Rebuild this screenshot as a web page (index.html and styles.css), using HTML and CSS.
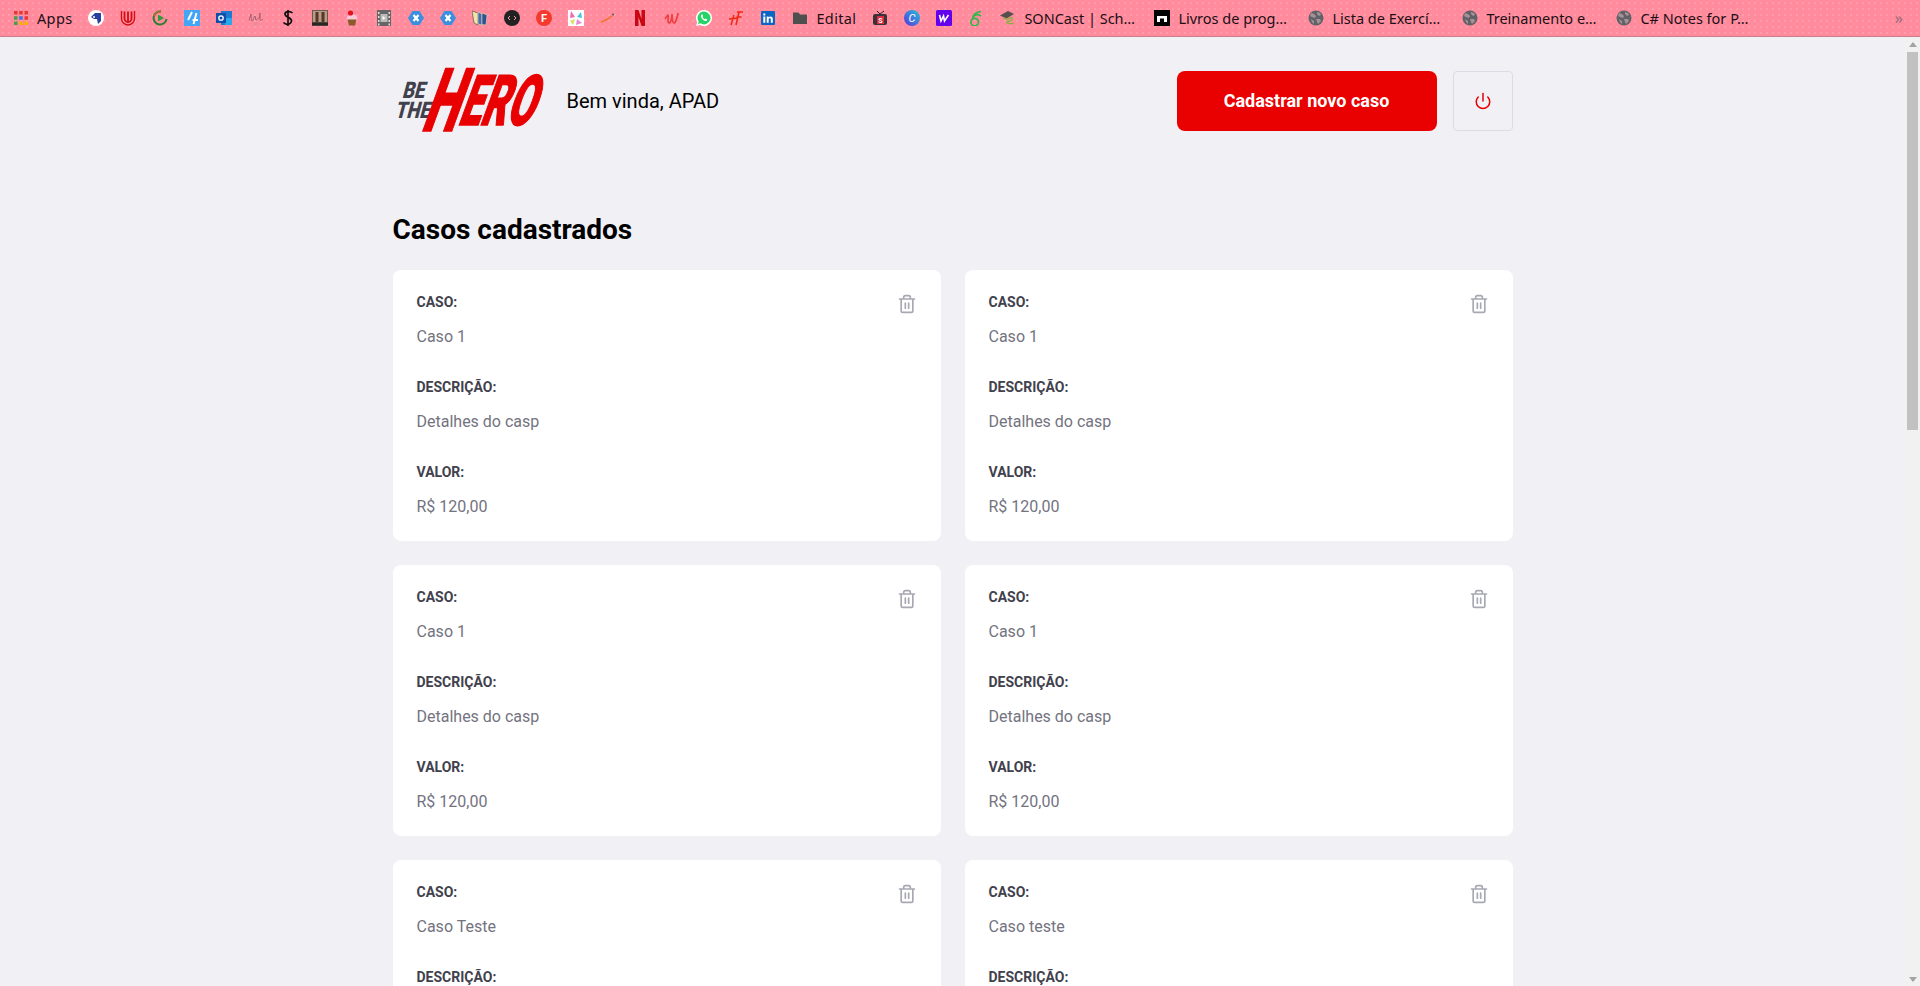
FILE: index.html

```html
<!DOCTYPE html>
<html lang="pt-BR">
<head>
  <meta charset="UTF-8">
  <title>Be The Hero</title>
  <link rel="stylesheet" href="styles.css">
</head>
<body>
  <svg class="defs" width="0" height="0">
    <symbol id="globe" viewBox="0 0 16 16">
      <circle cx="8" cy="8" r="7.500" fill="#5f6368"/>
      <path d="M3 3l3 1 2 2-1 2-3-1-2-1zM9 2l3 1 1 2-2 1-2-2zM8 9l4 0 1 2-3 3-1-2zM3 9l3 2 0 3-2-2z" fill="#a98f96"/>
    </symbol>
    <symbol id="xhex" viewBox="0 0 16 16">
      <path d="M4.500 1h7L16 8l-4.500 7h-7L0 8z" fill="#3a8fe0"/>
      <path d="M5.500 5l5 6M10.500 5l-5 6" stroke="#fff" stroke-width="2.200"/>
    </symbol>
    <symbol id="bin" viewBox="0 0 24 24">
      <path d="M3 6h18M19 6v14a2 2 0 0 1-2 2H7a2 2 0 0 1-2-2V6m3 0V4a2 2 0 0 1 2-2h4a2 2 0 0 1 2 2v2M10 11v6M14 11v6"/>
    </symbol>
  </svg>

  <nav class="bookmarks">
    <a class="mark short"><svg class="ico" viewBox="0 0 16 16"><path fill="#e53935" d="M1 1h3.500v3.500H1zM6.200 1h3.500v3.500H6.200zM11.500 1H15v3.500h-3.500zM11.500 6.200H15v3.500h-3.500z"/><path fill="#43a047" d="M1 6.200h3.500v3.500H1zM1 11.500h3.500V15H1z"/><path fill="#3f6fe0" d="M6.200 6.200h3.500v3.500H6.200z"/><path fill="#fbb000" d="M6.200 11.500h3.500V15H6.200zM11.500 11.500H15V15h-3.500z"/></svg>Apps</a>
    <a class="mark"><svg class="ico" viewBox="0 0 16 16"><circle cx="8" cy="8" r="8" fill="#fff"/><path d="M3 7l4-4h6v8l-3 3-1-5H6z" fill="#2b3f9e"/><circle cx="6" cy="7" r="1" fill="#fff"/></svg></a>
    <a class="mark"><svg class="ico" viewBox="0 0 16 16"><path d="M1.500 1v7.500a6.500 6.500 0 0 0 13 0V1" fill="none" stroke="#d40d12" stroke-width="1.400"/><path d="M4.500 1.500v7a3.500 3.500 0 0 0 7 0v-7M8 1.500v10" fill="none" stroke="#d40d12" stroke-width="1.800"/></svg></a>
    <a class="mark"><svg class="ico" viewBox="0 0 16 16"><path d="M14.500 9A6.500 6.500 0 1 1 9 1.600" fill="none" stroke="#2f7d32" stroke-width="2"/><path d="M2 6a6.500 6.500 0 0 1 7-4.400" fill="none" stroke="#a5703a" stroke-width="2"/><path d="M6 4.500L12 8l-6 3.500z" fill="#2f9a3a"/></svg></a>
    <a class="mark"><svg class="ico" viewBox="0 0 16 16"><rect width="16" height="16" fill="#42a5f5"/><path d="M8 2L4 10M12.500 3L9.500 14M8.500 10H14" fill="none" stroke="#fff" stroke-width="1.900"/></svg></a>
    <a class="mark"><svg class="ico" viewBox="0 0 16 16"><rect x="5" y="1" width="11" height="14" fill="#1f78d1"/><rect x="9" y="8" width="7" height="7" fill="#28a8ea"/><rect y="3" width="10" height="10" fill="#0f4fa8"/><circle cx="5" cy="8" r="2.200" fill="none" stroke="#fff" stroke-width="1.300"/></svg></a>
    <a class="mark"><svg class="ico" viewBox="0 0 16 16"><path d="M1 11c1-4 2-7 2-7s0 6 1 7 2-5 3-5 0 4 1 4 2-2 3-2 1-5 1-5v7c0 1 2 0 3-1" fill="none" stroke="#8a5a68" stroke-width=".8"/><path d="M5 14h6" stroke="#c7919e" stroke-width="1"/></svg></a>
    <a class="mark"><svg class="ico" viewBox="0 0 16 16"><path d="M12.500 3C10 .5 4.500 1.500 5 4.500S12 7.500 11.500 11 6 15.500 3.500 12.500M8 0v16" fill="none" stroke="#111" stroke-width="1.700"/></svg></a>
    <a class="mark"><svg class="ico" viewBox="0 0 16 16"><rect width="16" height="16" fill="#6a5a50"/><rect x="1" y="1" width="14" height="11" fill="#b59a84"/><path d="M3.500 2h3v10h-3zM9.500 2h3v10h-3z" fill="#5a3428"/><rect y="12.500" width="16" height="3" fill="#2c2622"/></svg></a>
    <a class="mark"><svg class="ico" viewBox="0 0 16 16"><path d="M3.500 9h9l-1.500 6.500H5z" fill="#8a5a2a"/><path d="M2.500 9.500a5.500 5.500 0 0 1 11 0z" fill="#f7c8d8"/><circle cx="6.500" cy="3" r="2.600" fill="#e2131f"/></svg></a>
    <a class="mark"><svg class="ico" viewBox="0 0 16 16"><rect x="1" width="14" height="16" fill="#666"/><path d="M2 2h1.500v2H2zM2 6h1.500v2H2zM2 10h1.500v2H2zM2 13.500h1.500v2H2zM12.500 2H14v2h-1.500zM12.500 6H14v2h-1.500zM12.500 10H14v2h-1.500zM12.500 13.500H14v2h-1.500z" fill="#ddd"/><rect x="4.500" y="4" width="7" height="8" fill="#bbb"/><path d="M6.500 6l3 2-3 2z" fill="#fff"/></svg></a>
    <a class="mark"><svg class="ico"><use href="#xhex"/></svg></a>
    <a class="mark"><svg class="ico"><use href="#xhex"/></svg></a>
    <a class="mark"><svg class="ico" viewBox="0 0 16 16"><path d="M0 1l6 2v12L2 13z" fill="#f0e4a8" stroke="#444" stroke-width=".6"/><path d="M6 2l4 2v11l-4-1z" fill="#4a6ab0" stroke="#ecdfae" stroke-width=".6"/><path d="M10 3l5 2-1 10-4-.5z" fill="#2f4f94" stroke="#ecdfae" stroke-width=".6"/></svg></a>
    <a class="mark"><svg class="ico" viewBox="0 0 16 16"><circle cx="8" cy="8" r="8" fill="#222"/><path d="M6 6L4 8l2 2M10 6l2 2-2 2" fill="none" stroke="#e9a0ae" stroke-width="1"/></svg></a>
    <a class="mark"><svg class="ico" viewBox="0 0 16 16"><circle cx="8" cy="8" r="8" fill="#f4392d"/><text class="ico-letter" x="8" y="12" fill="#fff">F</text></svg></a>
    <a class="mark"><svg class="ico" viewBox="0 0 16 16"><rect width="16" height="16" fill="#fff"/><path d="M3 1l4 6-5 1z" fill="#f06bb0"/><path d="M13 2L9 7l5 1z" fill="#3fc6d8"/><path d="M2 11l5-2-2 6z" fill="#d8e060"/><path d="M14 13L9 9l-1 6z" fill="#e48ad8"/></svg></a>
    <a class="mark"><svg class="ico" viewBox="0 0 16 16"><path d="M1 12c4-1 7-3 11-6" fill="none" stroke="#f0701a" stroke-width="1.300"/><circle cx="13" cy="4.500" r="1" fill="#555"/></svg></a>
    <a class="mark"><svg class="ico" viewBox="0 0 16 16"><path d="M3 0h3.500l3 9V0H13v16H9.500l-3-9v9H3z" fill="#c90812"/></svg></a>
    <a class="mark"><svg class="ico" viewBox="0 0 16 16"><path d="M1 9c1-1 2-4 3-4S3 13 5 13s3-6 3-8 0 8 2 8 4-9 4-10" fill="none" stroke="#ef3e3e" stroke-width="1.700"/></svg></a>
    <a class="mark"><svg class="ico" viewBox="0 0 16 16"><path d="M8 0a8 8 0 0 0-6.800 12.200L0 16l3.900-1.100A8 8 0 1 0 8 0z" fill="#fff"/><path d="M8 1.600a6.400 6.400 0 0 0-5.300 10l-.7 2.400 2.500-.7A6.400 6.400 0 1 0 8 1.600z" fill="#25d366"/><path d="M5.500 4.500c-1 1-.8 2.800.8 4.600s3.500 2.500 4.600 1.400l.4-1-1.800-1-.8.700c-1-.4-1.800-1.300-2.200-2.200l.7-.8-.9-1.900z" fill="#fff"/></svg></a>
    <a class="mark"><svg class="ico" viewBox="0 0 16 16"><path d="M3 15L6 5M8 15l3-13M1 9l9-1M9 2h6M8.500 7h5" fill="none" stroke="#f02a10" stroke-width="1.500"/></svg></a>
    <a class="mark"><svg class="ico" viewBox="0 0 16 16"><rect width="14" height="14" x="1" y="1" rx="1" fill="#0a66c2"/><path d="M3.300 6.500h2v6.200h-2zM3.300 3.500h2v1.900h-2zM6.700 6.500h1.900v.9c.9-1.500 4.200-1.500 4.200 1.400v3.900h-2V9.300c0-1.500-2.100-1.400-2.100 0v3.400h-2z" fill="#fff"/></svg></a>
    <a class="mark short"><svg class="ico" viewBox="0 0 16 16"><path d="M1 2.500h5.500L8 4.500h7V14H1z" fill="#4f4f4f"/></svg>Edital</a>
    <a class="mark"><svg class="ico" viewBox="0 0 16 16"><path d="M5 1l3 3 4-3" fill="none" stroke="#222" stroke-width="1"/><rect x="1" y="4" width="14" height="11" rx="2" fill="#3a3236"/><rect x="5" y="6" width="7" height="8" fill="#d82c40"/><text class="ico-tiny" x="8.500" y="12.500" fill="#fff">S</text></svg></a>
    <a class="mark"><svg class="ico" viewBox="0 0 16 16"><defs><linearGradient id="canva" x1="0" y1="1" x2="1" y2="0"><stop offset="0" stop-color="#5a32e0"/><stop offset="1" stop-color="#22c2d8"/></linearGradient></defs><circle cx="8" cy="8" r="8" fill="url(#canva)"/><text class="ico-letter ico-thin" x="8" y="12" fill="#fff">C</text></svg></a>
    <a class="mark"><svg class="ico" viewBox="0 0 16 16"><rect width="16" height="16" rx="1.500" fill="#6200ee"/><path d="M3.500 5l1.500 6 2.500-5 1 5 4-6" fill="none" stroke="#fff" stroke-width="1.600"/></svg></a>
    <a class="mark"><svg class="ico" viewBox="0 0 16 16"><path d="M13 1.500C8 2 5 5 4.500 9a3.800 3.800 0 1 0 1-.5M6 6c2-1.500 5-1.500 7 0" fill="none" stroke="#2fb84a" stroke-width="1.700"/></svg></a>
    <a class="mark named"><svg class="ico" viewBox="0 0 16 16"><path d="M0 5.500L8 1l6 3-7.500 4.500z" fill="#55504f"/><path d="M3.500 8c3 1.500 6 1 8-.5 2 2.500-1 3.500-3.500 4s-2 2.500 6 2" fill="none" stroke="#8db040" stroke-width="1.400"/></svg><span class="mark-name">SONCast | Sch…</span></a>
    <a class="mark named"><svg class="ico" viewBox="0 0 16 16"><rect width="16" height="16" fill="#000"/><path d="M3 6h10v6h-3V8.500H6V12H3z" fill="#fff"/></svg><span class="mark-name">Livros de prog…</span></a>
    <a class="mark named"><svg class="ico"><use href="#globe"/></svg><span class="mark-name">Lista de Exercí…</span></a>
    <a class="mark named"><svg class="ico"><use href="#globe"/></svg><span class="mark-name">Treinamento e…</span></a>
    <a class="mark named"><svg class="ico"><use href="#globe"/></svg><span class="mark-name">C# Notes for P…</span></a>
    <span class="more">»</span>
  </nav>

  <div class="window">
    <main class="page">
      <div class="profile-container">
        <header>
          <a class="logo">
            <span class="logo-small">BE<br>THE</span>
            <span class="logo-hero"><span class="logo-h">H</span>ERO</span>
          </a>
          <span class="welcome">Bem vinda, APAD</span>
          <a class="button">Cadastrar novo caso</a>
          <button class="logout"><svg class="power" viewBox="0 0 24 24"><path d="M18.360 6.640a9 9 0 1 1-12.730 0"/><line x1="12" y1="2" x2="12" y2="12"/></svg></button>
        </header>

        <h1>Casos cadastrados</h1>

        <ul class="cases">
          <li><strong>CASO:</strong><p>Caso 1</p><strong>DESCRIÇÃO:</strong><p>Detalhes do casp</p><strong>VALOR:</strong><p>R$ 120,00</p><button class="trash"><svg><use href="#bin"/></svg></button></li>
          <li><strong>CASO:</strong><p>Caso 1</p><strong>DESCRIÇÃO:</strong><p>Detalhes do casp</p><strong>VALOR:</strong><p>R$ 120,00</p><button class="trash"><svg><use href="#bin"/></svg></button></li>
          <li><strong>CASO:</strong><p>Caso 1</p><strong>DESCRIÇÃO:</strong><p>Detalhes do casp</p><strong>VALOR:</strong><p>R$ 120,00</p><button class="trash"><svg><use href="#bin"/></svg></button></li>
          <li><strong>CASO:</strong><p>Caso 1</p><strong>DESCRIÇÃO:</strong><p>Detalhes do casp</p><strong>VALOR:</strong><p>R$ 120,00</p><button class="trash"><svg><use href="#bin"/></svg></button></li>
          <li><strong>CASO:</strong><p>Caso Teste</p><strong>DESCRIÇÃO:</strong><button class="trash"><svg><use href="#bin"/></svg></button></li>
          <li><strong>CASO:</strong><p>Caso teste</p><strong>DESCRIÇÃO:</strong><button class="trash"><svg><use href="#bin"/></svg></button></li>
        </ul>
      </div>
    </main>

    <div class="scrollbar">
      <span class="arrow-up"></span>
      <span class="thumb"></span>
      <span class="arrow-down"></span>
    </div>
  </div>
</body>
</html>
```

FILE: styles.css

```css
* { margin: 0; padding: 0; box-sizing: border-box; }

body {
  display: flex;
  flex-direction: column;
  height: 100vh;
  overflow: hidden;
  background: #f0f0f5;
  font: 400 14px Roboto, sans-serif;
  -webkit-font-smoothing: antialiased;
}

.defs { display: block; height: 0; }

/* bookmarks bar */
.bookmarks {
  flex: none;
  display: flex;
  align-items: center;
  height: 37px;
  padding-left: 5px;
  background-color: #ff8b9c;
  background-image: radial-gradient(rgba(255, 255, 255, .16) .7px, transparent .8px);
  background-size: 6px 6px;
  border-bottom: 1px solid #c9808d;
  font: 14.500px "Noto Sans", sans-serif;
  color: #1c0f16;
}
.mark { flex: none; display: flex; align-items: center; gap: 8px; padding: 0 8px; white-space: nowrap; }
.mark.short { letter-spacing: .35px; }
.mark.named { width: 154px; }
.ico { flex: none; display: block; width: 16px; height: 16px; }
.ico-letter { font: 700 11px Roboto, sans-serif; text-anchor: middle; }
.ico-thin { font-style: italic; font-weight: 400; }
.ico-tiny { font: 700 7px Roboto, sans-serif; text-anchor: middle; }
.mark-name { flex: 1; overflow: hidden; }
.more { margin-left: auto; margin-right: 17px; font-size: 16px; color: #9b6a7a; }

/* page */
.window { flex: 1; min-height: 0; display: flex; }
.page { flex: 1; min-width: 0; overflow: hidden; }

.scrollbar {
  flex: none;
  display: flex;
  flex-direction: column;
  align-items: center;
  width: 15px;
  padding-top: 5px;
  background: #f1f1f1;
}
.arrow-up, .arrow-down { flex: none; width: 0; height: 0; border: 4px solid transparent; border-top-width: 0; border-bottom: 5px solid #a3a3a3; }
.arrow-down { margin-top: auto; margin-bottom: 4px; transform: rotate(180deg); }
.thumb { flex: none; width: 11px; height: 378px; margin-top: 5px; background: #c1c1c1; }

.profile-container {
  width: 100%;
  max-width: 1180px;
  padding: 0 30px;
  margin: 32px auto;
}

header { display: flex; align-items: center; }
.welcome { font-size: 20px; margin-left: 24px; }

/* logo as skewed text */
.logo { flex: none; display: flex; align-items: center; width: 150px; height: 64px; }
.logo-small {
  flex: none;
  width: 30px;
  margin-right: 8px;
  text-align: right;
  font: 900 23px/20px Roboto, sans-serif;
  color: #41414d;
  transform: skewX(-15deg) scaleX(.8);
  transform-origin: right center;
}
.logo-hero {
  display: block;
  font: 900 70px/64px Roboto, sans-serif;
  color: #e90000;
  white-space: nowrap;
  -webkit-text-stroke: 1.5px #e90000;
  transform: skewX(-20deg) scaleX(.56);
  transform-origin: left center;
}
.logo-h { font-size: 88px; line-height: 0; vertical-align: -6px; }

.button {
  flex: none;
  width: 260px;
  height: 60px;
  margin-left: auto;
  background: #e90000;
  border-radius: 8px;
  color: #fff;
  font-weight: 700;
  font-size: 18px;
  line-height: 60px;
  text-align: center;
}
.logout {
  flex: none;
  display: flex;
  align-items: center;
  justify-content: center;
  width: 60px;
  height: 60px;
  margin-left: 16px;
  background: transparent;
  border: 1px solid #dcdce6;
  border-radius: 4px;
}
.power { width: 18px; height: 18px; fill: none; stroke: #e90000; stroke-width: 2; stroke-linecap: round; stroke-linejoin: round; }

h1 { margin-top: 80px; margin-bottom: 24px; font-size: 28px; }

.cases { display: grid; grid-template-columns: repeat(2, 1fr); grid-auto-rows: 271px; gap: 24px; list-style: none; }
.cases li { position: relative; padding: 24px; background: #fff; border-radius: 8px; }
.cases strong { display: block; margin-bottom: 16px; color: #41414d; line-height: 16px; }
.cases p { color: #737380; font-size: 16px; line-height: 21px; }
.cases p + strong { margin-top: 32px; }

.trash { position: absolute; right: 24px; top: 24px; background: none; border: 0; }
.trash svg { display: block; width: 20px; height: 20px; fill: none; stroke: #a8a8b3; stroke-width: 2; stroke-linecap: round; stroke-linejoin: round; }
```
